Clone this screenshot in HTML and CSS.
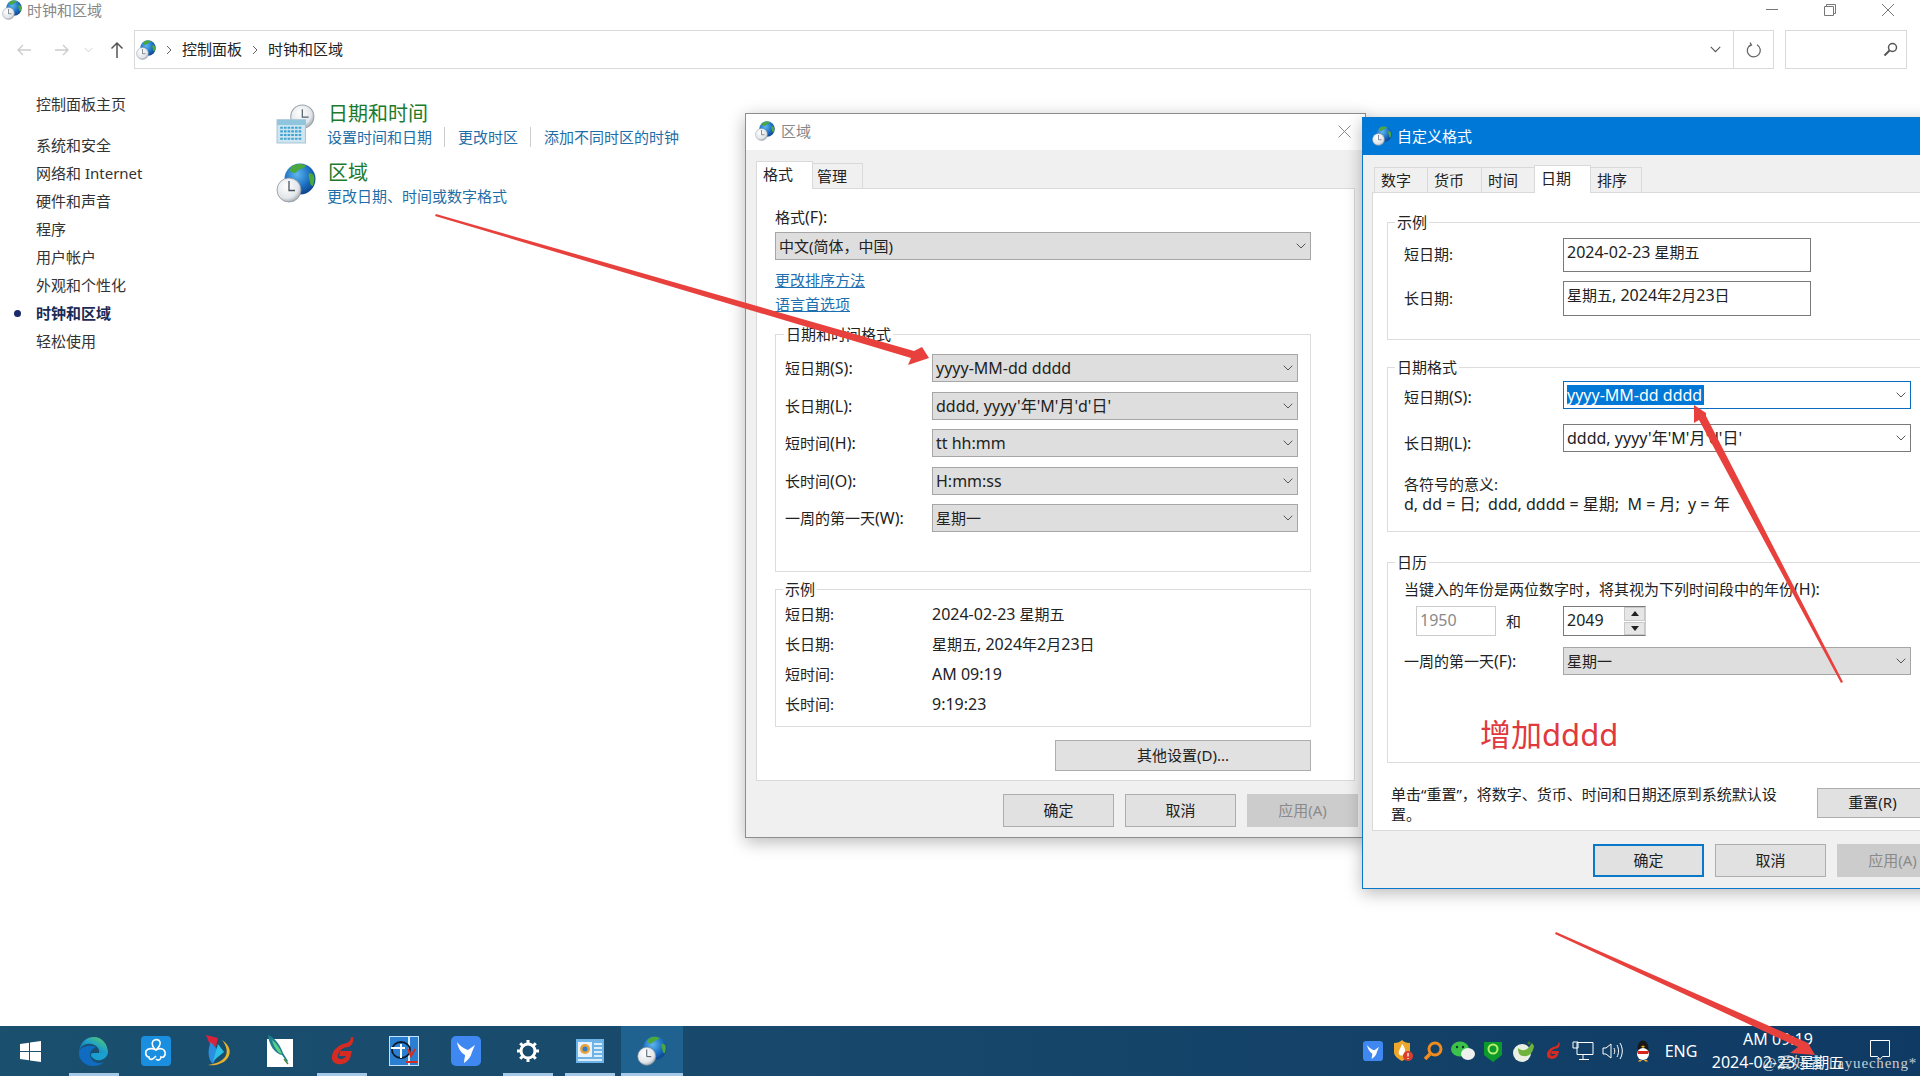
FILE: index.html
```html
<!DOCTYPE html>
<html lang="zh-CN">
<head>
<meta charset="utf-8">
<title>时钟和区域</title>
<link rel="stylesheet" href="styles.css">
</head>
<body>
<svg class="defs" width="0" height="0" aria-hidden="true">
  <defs>
    <radialGradient id="gb" cx="40%" cy="35%" r="70%"><stop offset="0" stop-color="#5fb6ee"/><stop offset=".6" stop-color="#1b6fc2"/><stop offset="1" stop-color="#0d3f86"/></radialGradient>
    <radialGradient id="gc" cx="40%" cy="35%" r="70%"><stop offset="0" stop-color="#ffffff"/><stop offset=".7" stop-color="#e2e6ea"/><stop offset="1" stop-color="#9aa3ab"/></radialGradient>
    <linearGradient id="ge" x1="0" y1="1" x2="1" y2="0"><stop offset="0" stop-color="#0c59a4"/><stop offset=".5" stop-color="#1fa0c8"/><stop offset="1" stop-color="#5ed25f"/></linearGradient>
    <symbol id="globe" viewBox="0 0 40 40">
      <circle cx="24" cy="16" r="15.500" fill="url(#gb)"/>
      <path d="M17 2.500c4-2 9-2 13 0-1 2-3 3-5 3-2 2-4 2-5 4-2 1-5 0-6-2 0-2 1-4 3-5zM33 10c2 0 4 1 5 3 1 3 0 7-1 10-2 0-3-2-3-4-1-3-2-6-1-9z" fill="#4aa83c"/>
      <circle cx="13" cy="27" r="12" fill="url(#gc)" stroke="#8d969e" stroke-width=".8"/>
      <path d="M13 18v9.500h6" fill="none" stroke="#4a5560" stroke-width="1.300"/>
    </symbol>
    <symbol id="calclock" viewBox="0 0 38 38">
      <circle cx="25" cy="12" r="11" fill="url(#gc)" stroke="#9aa3ab"/>
      <path d="M25 5v7.500h6" fill="none" stroke="#56626d" stroke-width="1.200"/>
      <rect x="1" y="15" width="27" height="22" fill="#cfe6f2" stroke="#a9c4d4"/>
      <path d="M1 15h27v5H1z" fill="#8fc6dd"/>
      <path d="M4 22.500h21M4 26h21M4 29.500h21M4 33h21" stroke="#3fa4cf" stroke-width="2" stroke-dasharray="2.500 1"/>
    </symbol>
    <symbol id="chev" viewBox="0 0 10 6"><path d="M.7.700 5 5l4.300-4.300" fill="none" stroke="currentColor" stroke-width="1"/></symbol>
    <symbol id="bird" viewBox="0 0 30 30">
      <rect width="30" height="30" rx="5" fill="#3f88f2"/>
      <path d="M6 6c4 5 8 7 11 8l7-5-3 7c-1 5-4 8-8 11 0-3 1-6 1-8-4-2-7-7-8-13z" fill="#fff"/>
    </symbol>
    <symbol id="redg" viewBox="0 0 30 30">
      <path d="M24 1c0 3-2 5-4 6-6 1-14 5-15 13-1 7 5 9 10 8 5-1 8-4 9-9l1-4H13l-1 5h7c-1 2-3 3-5 3-3 0-4-2-3-4 1-5 6-8 10-8 4-1 6-5 5-10z" fill="#d52b22"/>
    </symbol>
  </defs>
</svg>

<div class="explorer">
  <header class="titlebar">
    <svg class="ico18"><use href="#globe"/></svg>
    <span class="title-text">时钟和区域</span>
    <div class="winctl">
      <svg width="14" height="14" viewBox="0 0 14 14"><path d="M1 6.500h12" stroke="#777"/></svg>
      <svg width="14" height="14" viewBox="0 0 14 14"><path d="M1.500 3.500h9v9h-9zM3.500 3V1.500h9v9H11" fill="none" stroke="#777"/></svg>
      <svg width="14" height="14" viewBox="0 0 14 14"><path d="M1 1l12 12M13 1 1 13" stroke="#777"/></svg>
    </div>
  </header>

  <nav class="navrow">
    <div class="navbtns">
      <svg width="16" height="14" viewBox="0 0 16 14"><path d="M15 7H2M7 2 2 7l5 5" fill="none" stroke="#ccc" stroke-width="1.400"/></svg>
      <svg width="16" height="14" viewBox="0 0 16 14"><path d="M1 7h13M9 2l5 5-5 5" fill="none" stroke="#ccc" stroke-width="1.400"/></svg>
      <svg class="navdown" width="9" height="6"><use href="#chev"/></svg>
      <svg class="navup" width="14" height="17" viewBox="0 0 14 17"><path d="M7 17V2M1.500 7.500 7 2l5.500 5.500" fill="none" stroke="#555" stroke-width="1.500"/></svg>
    </div>
    <div class="addr">
      <svg class="ico20"><use href="#globe"/></svg>
      <svg class="crumb" width="6" height="10" viewBox="0 0 6 10"><path d="m1 1 4 4-4 4" fill="none" stroke="#666"/></svg>
      <span class="crumbtext">控制面板</span>
      <svg class="crumb" width="6" height="10" viewBox="0 0 6 10"><path d="m1 1 4 4-4 4" fill="none" stroke="#666"/></svg>
      <span class="crumbtext">时钟和区域</span>
      <svg class="addr-chev" width="11" height="7"><use href="#chev"/></svg>
      <div class="refresh">
        <svg width="16" height="16" viewBox="0 0 16 16"><path d="M5 2.500a6.500 6.500 0 1 0 6 .2M4 0.500 5.500 3 3 4.500" fill="none" stroke="#666" stroke-width="1.300"/></svg>
      </div>
    </div>
    <div class="search">
      <svg width="15" height="15" viewBox="0 0 15 15"><circle cx="9.500" cy="5.500" r="4" fill="none" stroke="#555" stroke-width="1.500"/><path d="M6.500 8.500 1.500 13.500" stroke="#555" stroke-width="2"/></svg>
    </div>
  </nav>

  <main class="cp">
    <ul class="side">
      <li class="side-home">控制面板主页</li>
      <li>系统和安全</li>
      <li>网络和 Internet</li>
      <li>硬件和声音</li>
      <li>程序</li>
      <li>用户帐户</li>
      <li>外观和个性化</li>
      <li class="side-on">时钟和区域</li>
      <li>轻松使用</li>
    </ul>
    <div class="cats">
      <section class="cat">
        <svg class="cat-ico cat-ico1"><use href="#calclock"/></svg>
        <div>
          <h2>日期和时间</h2>
          <p class="cat-links"><a>设置时间和日期</a><a>更改时区</a><a>添加不同时区的时钟</a></p>
        </div>
      </section>
      <section class="cat cat2">
        <svg class="cat-ico cat-ico2"><use href="#globe"/></svg>
        <div>
          <h2>区域</h2>
          <p class="cat-links"><a>更改日期、时间或数字格式</a></p>
        </div>
      </section>
    </div>
  </main>

  <footer class="taskbar">
    <div class="tb-start">
      <svg width="21" height="21" viewBox="0 0 21 21"><path d="M0 3l9-1.300V10H0zM10 1.500 21 0v10H10zM0 11h9v8.300L0 18zM10 11h11v10l-11-1.500z" fill="#fff"/></svg>
    </div>
    <div class="tb-item run"><svg width="32" height="32" viewBox="0 0 32 32"><path d="M30 18c0-9-6-16-14-16C8 2 2 8 1 16c2-5 7-8 12-7 6 1 9 5 8 9h9z" fill="url(#ge)"/><path d="M1 16c-1 8 5 15 14 15 4 0 8-1 11-4-5 2-11 1-13-4-2-4 0-9 5-11-7-3-15 0-17 4z" fill="#0f6cc0"/><path d="M13 20c1 4 6 6 10 5 3-1 6-3 7-7H17c-2 0-4 0-4 2z" fill="#1aa0d0"/></svg></div>
    <div class="tb-item"><svg width="30" height="30" viewBox="0 0 30 30"><rect width="30" height="30" rx="4" fill="#1a8fe0"/><path d="M15 14c-3-2-5-6-3-9 2-2 6-2 7 1 1 3-2 6-4 8zm0 0c3-2 8-2 9 2 1 4-2 6-4 5 0 3-3 4-5 2m0-9c-3-2-8-2-10 1-1 4 1 6 3 6 0 3 3 3 5 1l2-2" fill="none" stroke="#fff" stroke-width="1.600"/></svg></div>
    <div class="tb-item"><svg width="30" height="34" viewBox="0 0 30 34"><path d="M3 1l12 3-4 17z" fill="#d9233b"/><path d="M8 8c-4 8-3 18 2 22l6-12z" fill="#2b8fe0"/><path d="M15 10l6 8-11 9z" fill="#2ac0e8"/><path d="M19 6c9 6 10 14 4 20-4 4-11 6-18 5 7-1 13-3 17-8 3-4 2-11-3-17z" fill="#e7b32c"/></svg></div>
    <div class="tb-item"><svg width="28" height="34" viewBox="0 0 28 34"><rect x="1" y="5" width="26" height="28" fill="#fff"/><path d="M2 1c6 2 12 9 15 18l5 8-1 1-5-7C9 20 3 11 2 1z" fill="#1f7f8c"/><path d="M6 6c4 3 8 8 10 14l-3-1C9 15 7 10 6 6z" fill="#5ad08a"/><path d="M18 25l4 5" stroke="#4a8a3a" stroke-width="1.500"/></svg></div>
    <div class="tb-item run"><svg width="30" height="34" viewBox="0 0 30 30"><use href="#redg"/></svg></div>
    <div class="tb-item"><svg width="30" height="30" viewBox="0 0 30 30"><rect width="30" height="30" fill="#2a7fd0" stroke="#bfe3ff" stroke-width="2"/><path d="M20 0v30" stroke="#d5ecff" stroke-width="2"/><ellipse cx="12" cy="14" rx="9" ry="8" fill="none" stroke="#0a1a2a" stroke-width="1.800"/><path d="M2 12h14M12 8v14" stroke="#fff" stroke-width="2"/><path d="M19 13l3 7 4-7M17 26h11" stroke="#d52b22" stroke-width="2" fill="none"/></svg></div>
    <div class="tb-item"><svg width="30" height="30"><use href="#bird"/></svg></div>
    <div class="tb-item run"><svg width="24" height="24" viewBox="0 0 24 24"><circle cx="12" cy="12" r="7" fill="none" stroke="#fff" stroke-width="3"/><path d="M12 1v5M12 18v5M1 12h5M18 12h5M4.200 4.200l3.500 3.500M16.300 16.300l3.500 3.500M4.200 19.800l3.500-3.500M16.300 7.700l3.500-3.500" stroke="#fff" stroke-width="3"/></svg></div>
    <div class="tb-item run"><svg width="28" height="24" viewBox="0 0 28 24"><rect width="28" height="24" fill="#6fb4e6"/><rect x="2" y="3" width="14" height="15" fill="#e8f3fb"/><circle cx="9" cy="10" r="5" fill="#e8a23a"/><circle cx="9" cy="10" r="2.500" fill="#2f7fd0"/><path d="M18 5h8M18 9h8M18 13h8M18 17h8M2 21h24" stroke="#fff" stroke-width="1.500"/></svg></div>
    <div class="tb-item tb-active"><svg width="30" height="34"><use href="#globe"/></svg></div>

    <div class="tray">
      <div class="tr"><svg width="20" height="20"><use href="#bird"/></svg></div>
      <div class="tr"><svg width="20" height="22" viewBox="0 0 20 22"><path d="M1 3c4 0 6-1 8-3 2 2 4 3 8 3v9c0 4-4 7-8 9-4-2-8-5-8-9z" fill="#eda82c"/><path d="M9 4c3 3 4 7 2 10-1 2-4 2-5 0-1-3 1-4 3-10z" fill="#fff"/><circle cx="15" cy="16" r="5" fill="#d9402c"/><path d="M15 13v3.500M15 18v1" stroke="#fff" stroke-width="1.300"/></svg></div>
      <div class="tr"><svg width="20" height="20" viewBox="0 0 20 20"><circle cx="12" cy="8" r="6" fill="none" stroke="#ef8b1f" stroke-width="3"/><path d="M7 13 2 18" stroke="#ef8b1f" stroke-width="3.500"/></svg></div>
      <div class="tr"><svg width="24" height="20" viewBox="0 0 24 20"><ellipse cx="9" cy="8" rx="9" ry="7.500" fill="#3cc24a"/><ellipse cx="17" cy="13" rx="7" ry="6" fill="#eef1ee"/><circle cx="6" cy="6" r="1.200" fill="#0c3b20"/><circle cx="12" cy="6" r="1.200" fill="#0c3b20"/></svg></div>
      <div class="tr"><svg width="18" height="22" viewBox="0 0 18 22"><path d="M0 2h18v13l-9 7-9-7z" fill="#0c9a2c"/><circle cx="9" cy="9" r="4.500" fill="none" stroke="#b4f06c" stroke-width="2"/></svg></div>
      <div class="tr"><svg width="22" height="22" viewBox="0 0 22 22"><circle cx="10" cy="13" r="9" fill="#e9efe2"/><path d="M6 8c3 3 8 3 11-1l3-4 2 3c-1 7-5 11-11 10-3 0-5-3-5-8z" fill="#6fb33c"/><circle cx="17" cy="3" r="1.500" fill="#3d7a22"/></svg></div>
      <div class="tr"><svg width="18" height="20" viewBox="0 0 30 30"><use href="#redg"/></svg></div>
      <div class="tr"><svg width="22" height="20" viewBox="0 0 22 20"><path d="M5 1.500h16v12H5zM1 1h5v6H1zM11 14v4M7 18.500h10" fill="none" stroke="#fff" stroke-width="1"/></svg></div>
      <div class="tr"><svg width="22" height="20" viewBox="0 0 22 20"><path d="M1 7h3l5-4v14l-5-4H1zM12 7c1 2 1 4 0 6M15 4c2 4 2 8 0 12M18 2c3 5 3 11 0 16" fill="none" stroke="#fff" stroke-width="1"/></svg></div>
      <div class="tr"><svg width="16" height="22" viewBox="0 0 16 22"><ellipse cx="8" cy="8" rx="5.500" ry="7.500" fill="#181818"/><ellipse cx="8" cy="14" rx="6" ry="6" fill="#fff"/><path d="M2 11h12l-1 3H3z" fill="#d9261c"/><path d="M4 20h3l-1 1.500H3zM9 20h3l1 1.500h-3zM6 6.500l2-1 2 1-2 1.500z" fill="#f0a51e"/></svg></div>
      <div class="tb-eng">ENG</div>
      <div class="tb-clock"><div class="lat">AM 09:19</div><div><span class="lat">2024-02-23</span> 星期五</div></div>
      <div class="tb-notif"><svg width="20" height="22" viewBox="0 0 20 22"><path d="M.5.500h19v16h-7l-2.500 3-2.500-3h-7z" fill="none" stroke="#fff"/></svg></div>
    </div>
  </footer>
</div>

<section class="dlg dlg-region">
  <header class="dlg-title">
    <svg class="ico20"><use href="#globe"/></svg>
    <span>区域</span>
    <svg class="dlg-close" width="13" height="13" viewBox="0 0 13 13"><path d="M.5.500l12 12M12.500.500l-12 12" stroke="#888"/></svg>
  </header>
  <div class="tabs tabs-r">
    <div class="tab on w57">格式</div>
    <div class="tab w50">管理</div>
  </div>
  <div class="panel panel-r">
    <div class="lbl-top">格式<span class="lat">(F):</span></div>
    <div class="sel sel-f"><span>中文(简体，中国)</span><svg width="10" height="6"><use href="#chev"/></svg></div>
    <div class="r-links"><a>更改排序方法</a><a>语言首选项</a></div>
    <div class="grp grp-fmt">
      <div class="legend">日期和时间格式</div>
      <div class="grid-r">
        <label>短日期<span class="lat">(S):</span></label><div class="sel"><span class="lat">yyyy-MM-dd dddd</span><svg width="10" height="6"><use href="#chev"/></svg></div>
        <label>长日期<span class="lat">(L):</span></label><div class="sel"><span class="lat">dddd, yyyy'年'M'月'd'日'</span><svg width="10" height="6"><use href="#chev"/></svg></div>
        <label>短时间<span class="lat">(H):</span></label><div class="sel"><span class="lat">tt hh:mm</span><svg width="10" height="6"><use href="#chev"/></svg></div>
        <label>长时间<span class="lat">(O):</span></label><div class="sel"><span class="lat">H:mm:ss</span><svg width="10" height="6"><use href="#chev"/></svg></div>
        <label>一周的第一天<span class="lat">(W):</span></label><div class="sel"><span>星期一</span><svg width="10" height="6"><use href="#chev"/></svg></div>
      </div>
    </div>
    <div class="grp grp-ex">
      <div class="legend">示例</div>
      <div class="grid-ex">
        <span>短日期:</span><span><span class="lat">2024-02-23</span> 星期五</span>
        <span>长日期:</span><span>星期五<span class="lat">, 2024</span>年<span class="lat">2</span>月<span class="lat">23</span>日</span>
        <span>短时间:</span><span class="lat">AM 09:19</span>
        <span>长时间:</span><span class="lat">9:19:23</span>
      </div>
    </div>
    <div class="other-row"><button class="btn btn-other">其他设置(D)...</button></div>
  </div>
  <div class="foot foot-r">
    <button class="btn">确定</button>
    <button class="btn">取消</button>
    <button class="btn off">应用(A)</button>
  </div>
</section>

<section class="dlg dlg-custom">
  <header class="dlg-title dlg-title-on">
    <svg class="ico20"><use href="#globe"/></svg>
    <span>自定义格式</span>
  </header>
  <div class="tabs tabs-c">
    <div class="tab w53">数字</div>
    <div class="tab w54">货币</div>
    <div class="tab w53">时间</div>
    <div class="tab on w57">日期</div>
    <div class="tab w51">排序</div>
  </div>
  <div class="panel panel-c">
    <div class="grp c1">
      <div class="legend legend-c0">示例</div>
      <div class="grid-c1">
        <label>短日期:</label><div class="ro"><span class="lat">2024-02-23</span> 星期五</div>
        <label>长日期:</label><div class="ro ro2">星期五<span class="lat">, 2024</span>年<span class="lat">2</span>月<span class="lat">23</span>日</div>
      </div>
    </div>
    <div class="grp c2">
      <div class="legend legend-c">日期格式</div>
      <div class="grid-c2">
        <label class="lab-a">短日期<span class="lat">(S):</span></label>
        <div class="sel sel-w sel-focus"><span class="seltext lat">yyyy-MM-dd dddd</span><svg width="10" height="6"><use href="#chev"/></svg></div>
        <label class="lab-b">长日期<span class="lat">(L):</span></label>
        <div class="sel sel-w sel-dark"><span class="lat">dddd, yyyy'年'M'月'd'日'</span><svg width="10" height="6"><use href="#chev"/></svg></div>
      </div>
      <p class="meaning">各符号的意义:<br><span class="lat">d, dd = 日;&nbsp; ddd, dddd = 星期;&nbsp; M = 月;&nbsp; y = 年</span></p>
    </div>
    <div class="grp c3">
      <div class="legend legend-c">日历</div>
      <p class="cal-note">当键入的年份是两位数字时，将其视为下列时间段中的年份<span class="lat">(H):</span></p>
      <div class="cal-spin">
        <div class="y1950 lat">1950</div>
        <span class="cal-and">和</span>
        <div class="y2049"><span class="lat">2049</span><div class="spin"><i><svg width="8" height="5" viewBox="0 0 8 5"><path d="M4 0 8 5H0z" fill="#222"/></svg></i><i><svg width="8" height="5" viewBox="0 0 8 5"><path d="M0 0h8L4 5z" fill="#222"/></svg></i></div></div>
      </div>
      <div class="cal-first">
        <label>一周的第一天<span class="lat">(F):</span></label>
        <div class="sel sel-w sel-wk"><span>星期一</span><svg width="10" height="6"><use href="#chev"/></svg></div>
      </div>
      <div class="note-red">增加dddd</div>
    </div>
    <div class="reset-row">
      <p>单击“重置”，将数字、货币、时间和日期还原到系统默认设<br>置。</p>
      <button class="btn btn-reset">重置(R)</button>
    </div>
  </div>
  <div class="foot foot-c">
    <button class="btn btn-def">确定</button>
    <button class="btn">取消</button>
    <button class="btn off">应用(A)</button>
  </div>
</section>

<svg class="arrows" width="1920" height="1076" viewBox="0 0 1920 1076" aria-hidden="true">
  <path d="M436 214 914 351 922 347 929 358 908 365 911 358 435 216z" fill="#e8403c"/>
  <path d="M1843 682 1706 416 1706 413 1694 405 1694 423 1699 420 1841 683z" fill="#e8403c"/>
  <path d="M1556 932 1808 1043 1815 1055 1790 1053 1798 1047 1555 934z" fill="#e8403c"/>
</svg>
<div class="watermark">@爱好者 hayuecheng*</div>
</body>
</html>
```

FILE: styles.css
```css
* { box-sizing: border-box; }
html, body { margin: 0; padding: 0; }
body {
  position: relative;
  width: 1920px;
  height: 1076px;
  overflow: hidden;
  background: #fff;
  font: 15px/20px "Noto Sans", "Noto Sans CJK SC", sans-serif;
  color: #222;
}
p, h2, ul { margin: 0; padding: 0; }
svg { display: block; flex: none; }
.defs { position: absolute; }
.ico18 { width: 20px; height: 20px; }
.ico20 { width: 20px; height: 20px; }
.lat { font-size: 16px; }

.explorer { display: flex; flex-direction: column; height: 1076px; }

.titlebar { display: flex; align-items: center; height: 20px; padding-left: 2px; color: #888; }
.title-text { margin-left: 5px; }
.winctl { display: flex; gap: 44px; margin-left: auto; margin-right: 25px; }

.navrow { display: flex; height: 39px; margin-top: 10px; }
.navbtns { display: flex; align-items: center; width: 134px; padding-left: 16px; }
.navbtns svg:nth-child(2) { margin-left: 22px; }
.navdown { margin-left: 14px; color: #ccc; }
.navup { margin-left: 17px; }
.addr { display: flex; align-items: center; width: 1640px; height: 39px; border: 1px solid #d9d9d9; padding-left: 1px; color: #222; }
.crumb { margin: 0 10px 0 10px; }
.crumbtext { margin-top: -2px; }
.addr-chev { margin-left: auto; margin-right: 12px; color: #555; }
.refresh { display: flex; align-items: center; justify-content: center; width: 40px; height: 37px; border-left: 1px solid #d9d9d9; }
.search { display: flex; align-items: center; justify-content: flex-end; width: 122px; height: 39px; margin-left: 11px; padding-right: 8px; border: 1px solid #d9d9d9; }

.cp { flex: 1; display: flex; }
.side { width: 276px; padding: 21px 0 0 36px; list-style: none; color: #333; }
.side li { position: relative; height: 28px; line-height: 28px; }
.side-home { margin-bottom: 13px; }
.side-on { font-weight: 700; color: #1a2a55; }
.side-on::before { content: ""; position: absolute; left: -22px; top: 11px; width: 7px; height: 7px; border-radius: 50%; background: #1a2a6a; }
.cats { padding-top: 30px; }
.cat { display: flex; gap: 12px; }
.cat2 { margin-top: 11px; }
.cat h2 { margin-bottom: -2px; font-size: 20px; line-height: 30px; font-weight: 400; color: #1c7a2c; }
.cat-ico { width: 40px; height: 40px; margin-top: 5px; }
.cat-links { display: flex; margin-left: -1px; color: #1f6ea8; }
.cat-links a + a { margin-left: 12px; padding-left: 13px; border-left: 1px solid #ccc; }

.taskbar { display: flex; height: 50px; background: linear-gradient(90deg, #1a4f6e 0%, #18496c 40%, #0f3a64 100%); }
.tb-start { display: flex; align-items: center; justify-content: center; width: 63px; padding-right: 3px; }
.tb-item { position: relative; display: flex; align-items: center; justify-content: center; width: 62px; }
.tb-item.run::after { content: ""; position: absolute; left: 6px; right: 6px; bottom: 0; height: 3px; background: #a5c8e6; }
.tb-active { background: #1f6290; }
.tb-active::after { content: ""; position: absolute; left: 0; right: 0; bottom: 0; height: 3px; background: #a5c8e6; }
.tray { display: flex; align-items: center; margin-left: auto; width: 562px; color: #fff; }
.tr { display: flex; justify-content: center; width: 30px; }
.tb-eng { width: 46px; text-align: center; font-size: 16px; }
.tb-clock { width: 148px; text-align: center; font-size: 15px; line-height: 23px; }
.tb-notif { padding-left: 18px; }

.watermark { position: absolute; right: 3px; top: 1053px; color: rgba(235, 235, 235, .85); font: 15px/20px "Liberation Serif", "Noto Sans CJK SC", serif; letter-spacing: .8px; }

.dlg { position: absolute; display: flex; flex-direction: column; background: #f0f0f0; box-shadow: 0 4px 16px rgba(0, 0, 0, .28); }
.dlg-region { left: 745px; top: 113px; width: 621px; height: 725px; border: 1px solid #8e8e8e; }
.dlg-custom { left: 1362px; top: 117px; width: 600px; height: 772px; border: 1px solid #0a78c8; }
.dlg-title { position: relative; display: flex; align-items: center; flex: none; gap: 6px; height: 36px; padding-left: 9px; padding-bottom: 2px; background: #fff; color: #888; }
.dlg-title-on { height: 37px; background: #0078d7; color: #fff; gap: 5px; }
.dlg-close { position: absolute; right: 14px; top: 11px; }

.tabs { display: flex; align-items: flex-end; flex: none; }
.tabs-r { margin: 10px 0 0 10px; height: 28px; }
.tabs-c { margin: 10px 0 0 11px; height: 27px; }
.tab { height: 25px; padding-left: 6px; line-height: 25px; background: #f0f0f0; border: 1px solid #d9d9d9; border-bottom: 0; border-right: 0; }
.tab:last-child { border-right: 1px solid #d9d9d9; }
.tab.on { position: relative; height: 28px; padding-left: 6px; line-height: 24px; background: #fff; border-right: 1px solid #d9d9d9; margin-bottom: -1px; z-index: 1; }
.tab.on + .tab { border-left: 0; }
.tab.w50 { padding-left: 4px; }
.w57 { width: 57px; }
.w50 { width: 50px; }
.w53 { width: 53px; }
.w54 { width: 54px; }
.w51 { width: 51px; }

.panel { flex: none; background: #fff; border: 1px solid #d9d9d9; }
.panel-r { width: 599px; height: 593px; margin-left: 10px; padding: 18px 0 0 18px; }
.panel-c { width: 640px; height: 639px; margin-left: 9px; padding: 29px 0 0 14px; }

.lbl-top { height: 20px; }
.sel { display: flex; align-items: center; justify-content: space-between; height: 28px; padding: 0 4px 0 3px; background: #dedede; border: 1px solid #a6a6a6; color: #222; }
.sel svg { color: #555; }
.sel-f { width: 536px; margin-top: 5px; }
.r-links { display: flex; flex-direction: column; align-items: flex-start; margin-top: 8px; line-height: 24px; color: #1f6fb0; text-decoration: underline; }

.grp { position: relative; border: 1px solid #dcdcdc; }
.legend { width: fit-content; margin-top: -11px; padding: 0 2px; background: #fff; line-height: 20px; }
.grp-fmt { width: 536px; height: 238px; margin-top: 18px; padding-left: 9px; }
.grp-fmt .legend { margin-left: -1px; }
.grid-r { display: grid; grid-template-columns: 147px 366px; grid-auto-rows: 28px; row-gap: 9.5px; align-items: center; margin-top: 10px; }
.grp-ex { width: 536px; height: 138px; margin-top: 17px; padding-left: 8px; }
.grid-ex { display: grid; grid-template-columns: 147px 1fr; grid-auto-rows: 30px; align-items: center; padding-left: 1px; }
.grp-ex .legend { margin-left: -1px; }
.other-row { display: flex; justify-content: flex-end; width: 536px; margin-top: 13px; }

.btn { display: block; width: 111px; height: 33px; padding: 0 0 2px; background: #e1e1e1; border: 1px solid #adadad; font: inherit; color: #222; }
.btn.off { background: #cccccc; border-color: #cccccc; color: #8a8a8a; }
.btn-other { width: 256px; height: 31px; }
.foot { display: flex; flex: none; gap: 11px; margin-top: 13px; }
.foot-r { justify-content: flex-end; padding-right: 7px; }
.foot-c { margin-left: 230px; }
.btn-def { border: 2px solid #0a78c8; }

.c1 { width: 620px; height: 118px; padding-left: 16px; }
.legend-c0 { margin-left: -9px; }
.legend-c { margin-left: -9px; }
.grid-c1 { display: grid; grid-template-columns: 159px 248px; row-gap: 9px; align-items: center; margin-top: 6px; }
.grid-c1 label { margin-top: -2px; }
.ro { height: 34px; padding: 3px 0 0 3px; background: #fff; border: 1px solid #7a7a7a; }
.ro2 { height: 35px; }
.c2 { width: 620px; height: 165px; margin-top: 27px; padding-left: 16px; }
.grid-c2 { display: grid; grid-template-columns: 159px 348px; row-gap: 14px; align-items: center; margin-top: 4px; }
.lab-a { padding-top: 3px; }
.lab-b { padding-top: 10px; }
.sel-w { background: #fff; border-color: #7a7a7a; }
.sel-focus { height: 28px; border: 1px solid #0a6ec0; }
.sel-dark { height: 28px; }
.seltext { background: #0078d7; color: #fff; padding-right: 2px; line-height: 20px; }
.meaning { margin-top: 21px; }
.c3 { width: 620px; height: 201px; margin-top: 30px; padding-left: 16px; }
.cal-note { margin-top: 7px; }
.cal-spin { display: flex; align-items: center; margin-top: 7px; }
.y1950 { width: 80px; height: 30px; margin-left: 12px; padding: 3px 0 0 3px; border: 1px solid #ccc; color: #8a8a8a; }
.cal-and { width: 57px; margin-left: 10px; }
.y2049 { display: flex; justify-content: space-between; width: 83px; height: 30px; padding: 3px 0 0 3px; border: 1px solid #7a7a7a; border-right-color: #ccc; }
.spin { display: flex; flex-direction: column; gap: 1px; width: 21px; height: 28px; margin-top: -3px; }
.spin i { display: flex; align-items: center; justify-content: center; flex: 1; background: #e6e6e6; border: 1px solid #c8c8c8; }
.cal-first { display: grid; grid-template-columns: 159px 348px; align-items: center; margin-top: 11px; }
.sel-wk { background: #dedede; border-color: #a6a6a6; }
.note-red { margin: 39px 0 0 76px; font-size: 31px; line-height: 40px; color: #e0393e; }
.reset-row { display: flex; margin-top: 22px; padding-left: 4px; line-height: 20px; }
.reset-row p { width: 426px; margin-top: -1px; }
.btn-reset { width: 111px; height: 30px; margin-top: 3px; }

.arrows { position: absolute; left: 0; top: 0; pointer-events: none; }
```
